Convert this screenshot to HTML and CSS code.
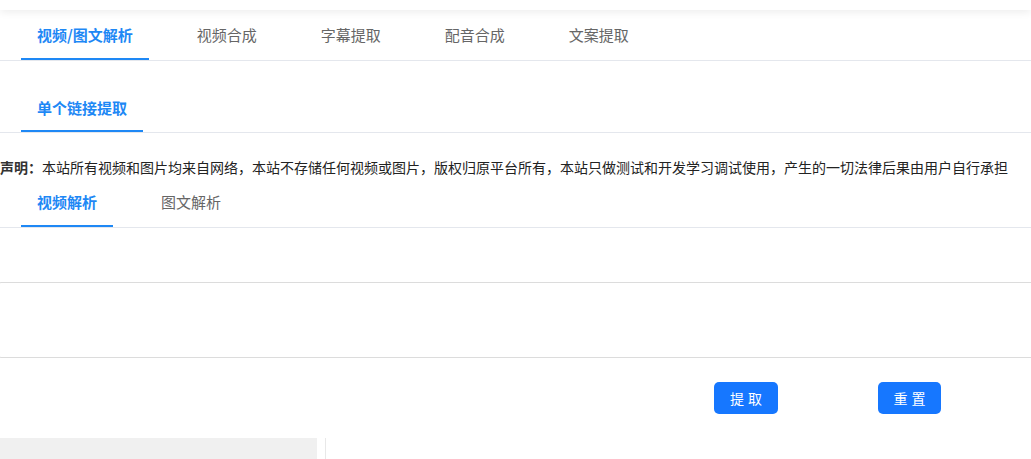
FILE: index.html
```html
<!DOCTYPE html>
<html lang="zh-CN">
<head>
  <meta charset="UTF-8">
  <meta name="viewport" content="width=device-width, initial-scale=1.0">
  <title>视频/图文解析</title>
  <link rel="stylesheet" href="styles.css">
</head>
<body>
  <div class="topbar"></div>

  <div class="tabs">
    <div class="tab active">视频/图文解析</div>
    <div class="tab">视频合成</div>
    <div class="tab">字幕提取</div>
    <div class="tab">配音合成</div>
    <div class="tab">文案提取</div>
  </div>

  <div class="tabs sub">
    <div class="tab active">单个链接提取</div>
  </div>

  <p class="notice"><b>声明：</b>本站所有视频和图片均来自网络，本站不存储任何视频或图片，版权归原平台所有，本站只做测试和开发学习调试使用，产生的一切法律后果由用户自行承担</p>

  <div class="tabs">
    <div class="tab active">视频解析</div>
    <div class="tab">图文解析</div>
  </div>

  <div class="form">
    <textarea class="link-input"></textarea>
    <div class="actions">
      <button type="button" class="btn">提取</button>
      <button type="button" class="btn">重置</button>
    </div>
  </div>

  <div class="result">
    <div class="preview"></div>
    <div class="detail"></div>
  </div>
</body>
</html>
```

FILE: styles.css
```css
body {
  margin: 0;
  font-family: "Noto Sans CJK SC", "Microsoft YaHei", sans-serif;
  background: #fff;
  color: #333;
  overflow: hidden;
}

.topbar {
  height: 10px;
  background: #fff;
  box-shadow: 0 2px 8px rgba(0, 0, 0, 0.08);
  position: relative;
}

.tabs {
  display: flex;
  gap: 32px;
  padding-left: 21px;
  border-bottom: 1px solid #e4e7ed;
}

.tabs.sub {
  margin-top: 23px;
}

.tab {
  position: relative;
  height: 50px;
  line-height: 50px;
  padding: 0 16px;
  font-size: 15px;
  color: #666;
  cursor: pointer;
}

.tab.active {
  color: #1e88f5;
  font-weight: bold;
}

.tab.active::after {
  content: "";
  position: absolute;
  left: 0;
  right: 0;
  bottom: 0;
  height: 2px;
  background: #1e88f5;
}

.tabs.sub .tab {
  height: 48px;
  line-height: 48px;
}

.notice {
  margin: 24px 0 0;
  font-size: 14px;
  line-height: 20px;
  color: #222;
  white-space: nowrap;
}

.notice b {
  color: #333;
}

.form {
  padding-top: 54px;
}

.link-input {
  display: block;
  box-sizing: border-box;
  width: calc(100% + 20px);
  height: 76px;
  margin-left: -3px;
  border: 1px solid #dcdcdc;
  border-radius: 4px;
  resize: none;
  outline: none;
}

.actions {
  display: flex;
  justify-content: flex-end;
  gap: 100px;
  padding: 24px 90px 0 0;
}

.btn {
  width: 64px;
  height: 32px;
  padding: 0 0 0 4px;
  border: none;
  border-radius: 5px;
  background: #1677ff;
  color: #fff;
  font-family: inherit;
  font-size: 14px;
  letter-spacing: 4px;
  cursor: pointer;
}

.btn + .btn {
  width: 63px;
}

.result {
  display: flex;
  margin-top: 24px;
  height: 40px;
}

.preview {
  width: 317px;
  background: #f0f0f0;
}

.detail {
  flex: 1;
  margin-left: 8px;
  border-left: 1px solid #e8e8e8;
}
```
